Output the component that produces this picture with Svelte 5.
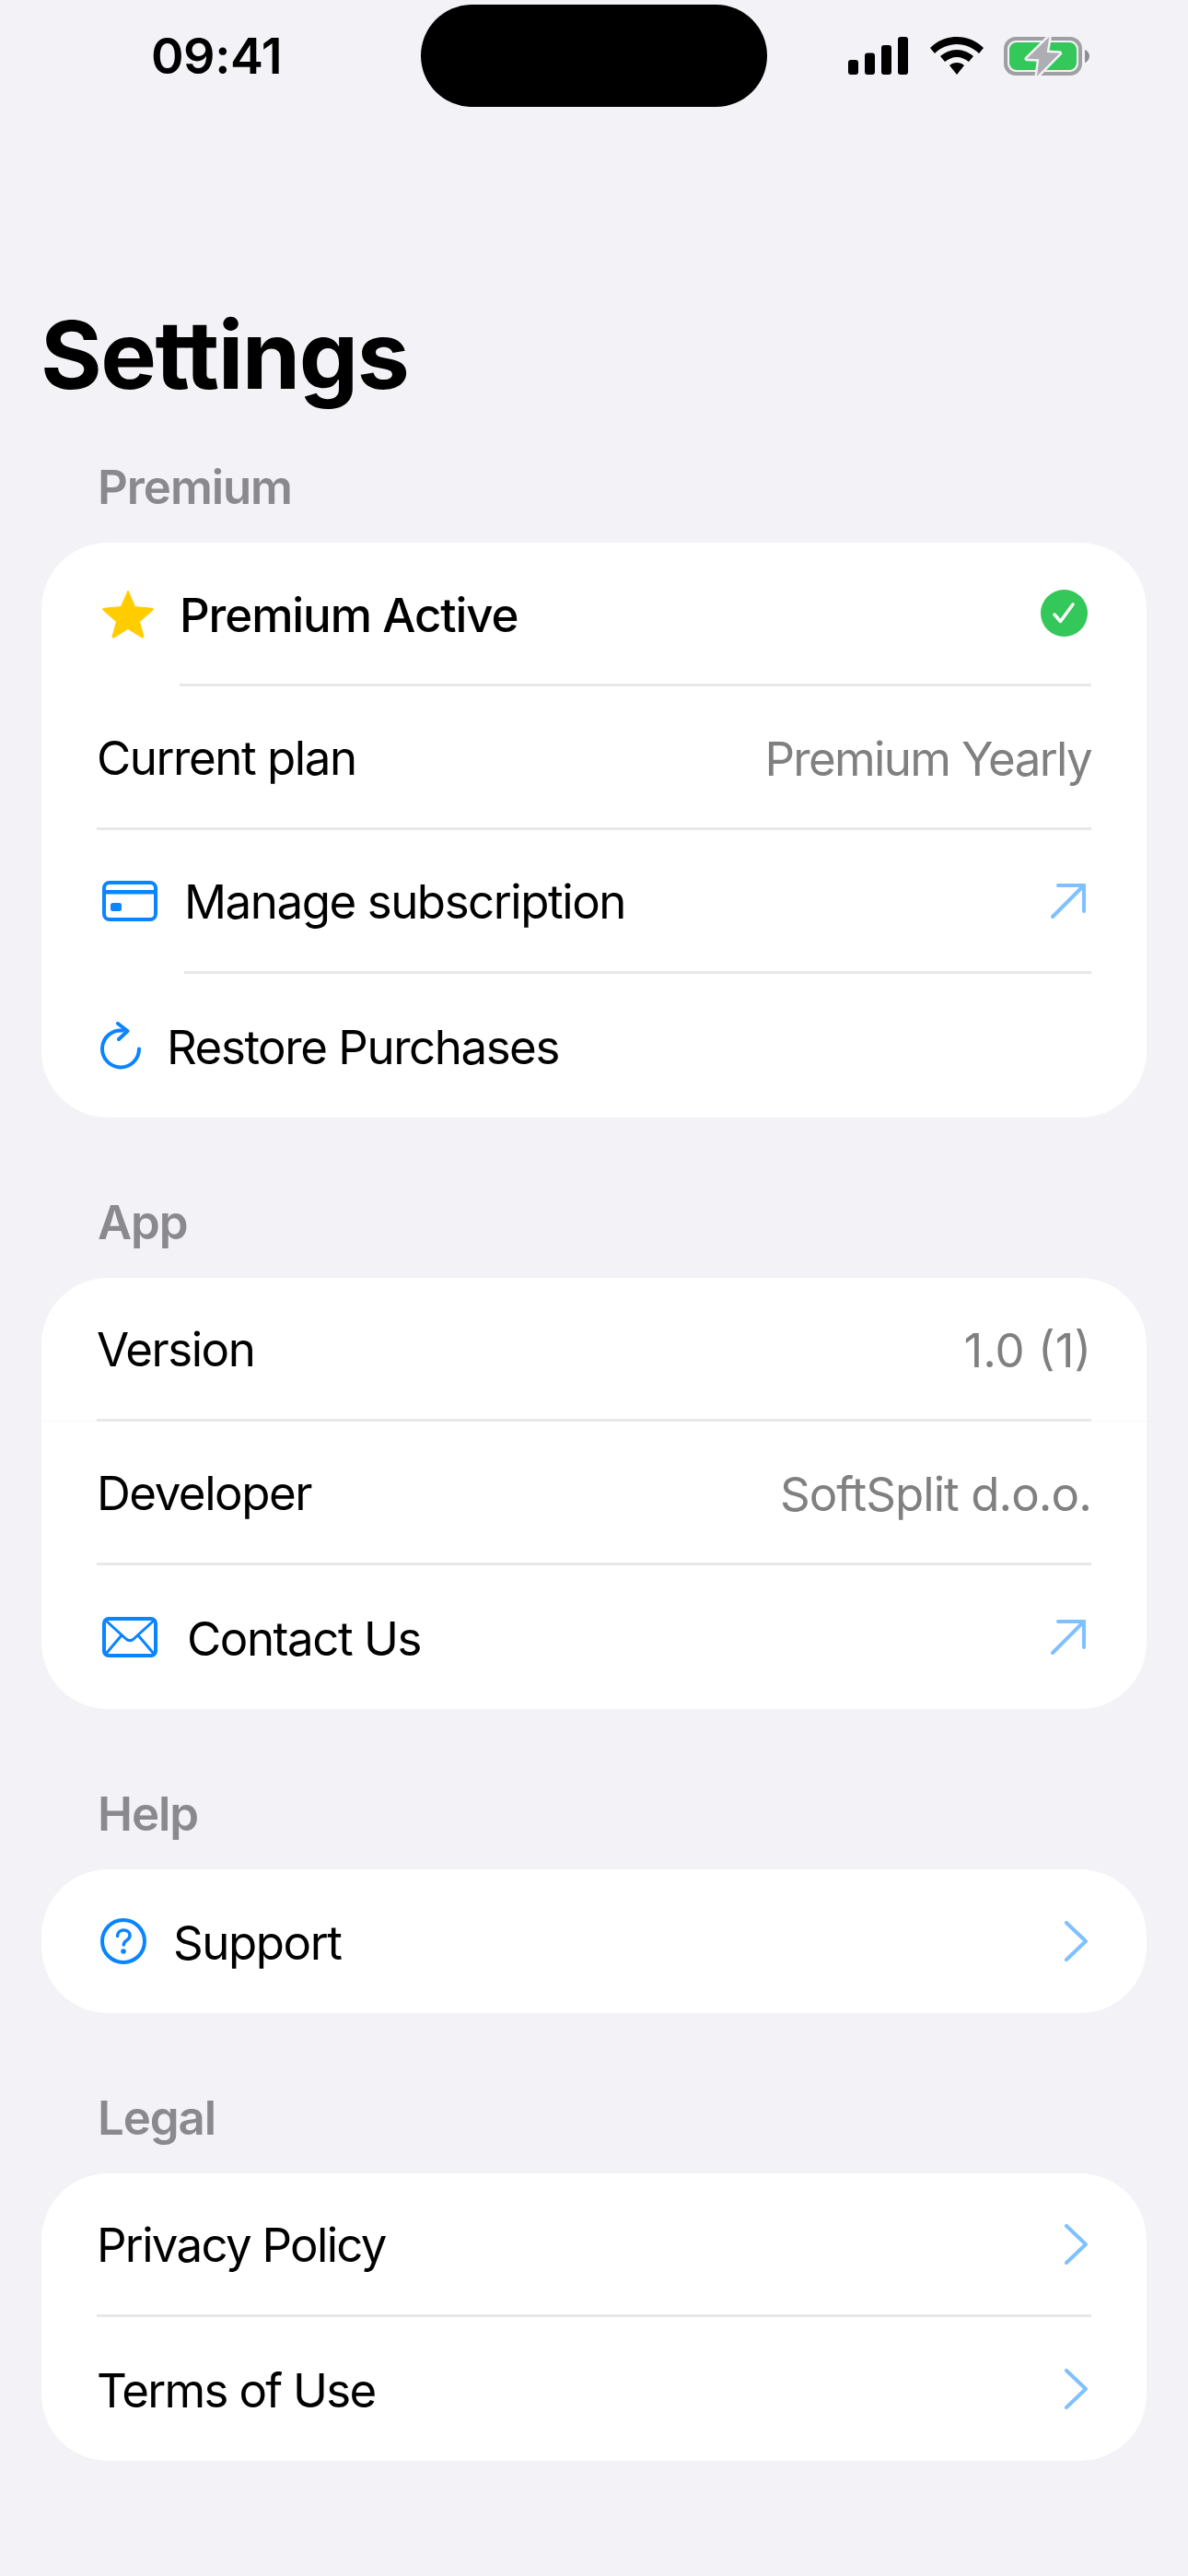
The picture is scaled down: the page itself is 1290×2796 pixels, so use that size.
<script>
    const sections = [
        {
            title: 'Premium',
            rows: [
                { label: 'Premium Active', icon: 'star', strong: true, trail: 'check', inset: 90, gap: 27 },
                { label: 'Current plan', value: 'Premium Yearly', track: -1.65, inset: 0 },
                { label: 'Manage subscription', icon: 'card', trail: 'arrow', inset: 95, gap: 29 },
                { label: 'Restore Purchases', icon: 'restore', gap: 28 }
            ]
        },
        {
            title: 'App',
            rows: [
                { label: 'Version', value: '1.0 (1)', track: 0, inset: 0, faint: true },
                { label: 'Developer', value: 'SoftSplit d.o.o.', track: -0.95, inset: 0 },
                { label: 'Contact Us', icon: 'mail', trail: 'arrow', gap: 32 }
            ]
        },
        {
            title: 'Help',
            rows: [{ label: 'Support', icon: 'help', trail: 'chevron', gap: 29 }]
        },
        {
            title: 'Legal',
            rows: [
                { label: 'Privacy Policy', labelTrack: -1.7, trail: 'chevron', inset: 0 },
                { label: 'Terms of Use', labelTrack: -1.7, trail: 'chevron' }
            ]
        }
    ];
</script>

<div class="page">
    <header class="status">
        <span class="time">09:41</span>
        <div class="island"></div>
        <div class="indicators">
            <svg class="signal" width="66" height="41" viewBox="0 0 66 41">
                <rect x="0" y="25" width="11" height="16" rx="3" />
                <rect x="18" y="17.500" width="11" height="23.500" rx="3" />
                <rect x="36" y="9" width="11" height="32" rx="3" />
                <rect x="54" y="0" width="11" height="41" rx="3" />
            </svg>
            <svg class="wifi" width="58" height="42" viewBox="0 0 58 42">
                <path d="M29 0C18 0 8 4 0 12l5 6c6-6 15-10 24-10s18 4 24 10l5-6C50 4 40 0 29 0z" />
                <path d="M29 14c-7 0-13 3-18 7l5 6c4-3 8-5 13-5s9 2 13 5l5-6c-5-4-11-7-18-7z" />
                <path d="M29 28c-3 0-6 1-8 3l8 10 8-10c-2-2-5-3-8-3z" />
            </svg>
            <svg class="battery" width="93" height="44" viewBox="0 0 93 44">
                <rect x="2" y="3" width="81" height="38" rx="11" fill="none" stroke="#a0a0a3" stroke-width="4" />
                <path d="M88 15c3 1 5 4 5 7s-2 6-5 7z" fill="#8e8e93" />
                <rect x="6" y="7" width="73" height="30" rx="8" fill="#34c759" />
                <path d="M49.300 1L25 24.700l13.300.6L36 43.700l24.700-25L46.700 18z" fill="#aeaeb2" stroke="#f2f2f7" stroke-width="5" stroke-linejoin="round" paint-order="stroke" />
            </svg>
        </div>
    </header>

    <h1>Settings</h1>

    {#each sections as section}
        <section>
            <h2>{section.title}</h2>
            <div class="card">
                {#each section.rows as row}
                    <div class="row">
                        <div class="lead" style={`gap: ${row.gap ?? 0}px`}>
                            {#if row.icon === 'star'}
                                <svg class="icon-star" width="58" height="54" viewBox="0 0 58 54">
                                    <path d="M29 2l7.600 17.600 18.900 1.700c1 .1 1.300 1.200.6 1.800L41.500 35.800l4.500 16c.3 1-.8 1.800-1.700 1.300L29 43.500 13.700 53.100c-.9.5-2-.3-1.700-1.300l4.500-16L1.900 23.100c-.7-.6-.4-1.700.6-1.800l18.900-1.700L29 2z" fill="#ffcc00" stroke="#ffcc00" stroke-width="1" stroke-linejoin="round" />
                                </svg>
                            {:else if row.icon === 'card'}
                                <svg class="icon-card" width="60" height="44" viewBox="0 0 60 44" fill="none">
                                    <rect x="2" y="2" width="56" height="40" rx="6" stroke="#0a84ff" stroke-width="4" />
                                    <rect x="2" y="10" width="56" height="4.500" fill="#0a84ff" />
                                    <rect x="9" y="24" width="12" height="9" rx="2.500" fill="#0a84ff" />
                                </svg>
                            {:else if row.icon === 'restore'}
                                <svg class="icon-restore" width="45" height="53" viewBox="0 0 45 53" fill="none">
                                    <path d="M25 9.500A20 20 0 1 0 43 29.500" stroke="#0a84ff" stroke-width="4" stroke-linecap="round" />
                                    <path d="M20 2l10.500 8L21 19" stroke="#0a84ff" stroke-width="4" stroke-linecap="round" stroke-linejoin="round" />
                                </svg>
                            {:else if row.icon === 'mail'}
                                <svg class="icon-mail" width="60" height="44" viewBox="0 0 60 44" fill="none" stroke="#0a84ff" stroke-width="3">
                                    <rect x="2" y="2" width="56" height="40" rx="5" stroke-width="4" />
                                    <path d="M4 4l22 20c2.500 2 5.500 2 8 0L56 4" stroke-linejoin="round" />
                                    <path d="M21 20L4 40M39 20l17 20" />
                                </svg>
                            {:else if row.icon === 'help'}
                                <svg class="icon-help" width="50" height="50" viewBox="0 0 50 50" fill="none">
                                    <circle cx="25" cy="25" r="23" stroke="#0a84ff" stroke-width="4" />
                                    <path d="M18.500 19.500c0-4 3-6.500 6.800-6.500s6.700 2.400 6.700 5.800c0 2.600-1.500 4-3.500 5.300-2 1.300-3.200 2.400-3.200 4.900" stroke="#0a84ff" stroke-width="3.500" stroke-linecap="round" />
                                    <circle cx="25" cy="36" r="2.800" fill="#0a84ff" />
                                </svg>
                            {/if}
                            <span class="label" class:strong={row.strong} style={row.labelTrack ? `letter-spacing: ${row.labelTrack}px` : undefined}>{row.label}</span>
                        </div>

                        {#if row.value}
                            <span class="value" style={`letter-spacing: ${row.track}px`}>{row.value}</span>
                        {:else if row.trail === 'check'}
                            <svg class="trail-check" width="51" height="51" viewBox="0 0 51 51" fill="none">
                                <circle cx="25.500" cy="25.500" r="25.500" fill="#34c759" />
                                <path d="M15 27l6.500 7.500L35 16" stroke="#fff" stroke-width="3.500" stroke-linecap="round" stroke-linejoin="round" />
                            </svg>
                        {:else if row.trail === 'arrow'}
                            <svg class="trail-arrow" width="38" height="38" viewBox="0 0 38 38" fill="none" stroke="#7fc1ff" stroke-width="4" stroke-linecap="round" stroke-linejoin="round">
                                <path d="M2 36L36 2" />
                                <path d="M8 2h28v28" />
                            </svg>
                        {:else if row.trail === 'chevron'}
                            <svg class="trail-chevron" width="26" height="44" viewBox="0 0 26 44" fill="none" stroke="#7fc1ff" stroke-width="4" stroke-linecap="round" stroke-linejoin="round">
                                <path d="M3 2l21 20L3 42" />
                            </svg>
                        {/if}
                    </div>
                    {#if row.inset !== undefined}
                        <div class="sep" class:faint={row.faint} style={`margin-left: ${row.inset}px`}></div>
                    {/if}
                {/each}
            </div>
        </section>
    {/each}
</div>

<style>
:global(body) {
    margin: 0;
    background: #f2f2f7;
}

.page {
    width: 1290px;
    height: 2796px;
    overflow: hidden;
    background: #f2f2f7;
    font-family: Inter, "Liberation Sans", sans-serif;
    color: #000;
}

.status {
    height: 121px;
    padding-top: 5px;
    box-sizing: border-box;
    display: grid;
    grid-template-columns: 457px 376px 457px;
}

.time {
    font-size: 54px;
    font-weight: 600;
    line-height: 111px;
    padding-left: 164px;
    letter-spacing: -0.5px;
}

.island {
    height: 111px;
    background: #000;
    border-radius: 56px;
}

.indicators {
    display: flex;
    align-items: center;
    padding-left: 88px;
    height: 111px;
}

.wifi {
    margin-left: 23px;
}

.battery {
    margin-left: 22px;
}

h1 {
    margin: 204px 0 53px 44px;
    font-size: 102px;
    line-height: 120px;
    font-weight: 700;
    letter-spacing: -1.500px;
}

section {
    margin: 0 45px;
}

h2 {
    margin: 0;
    padding-left: 61px;
    font-size: 51px;
    line-height: 62px;
    font-weight: 600;
    color: #8a8a8e;
    letter-spacing: -1.100px;
}

.card {
    margin-top: 29px;
    margin-bottom: 83px;
    padding: 0 60px;
    background: #fff;
    border-radius: 72px;
    isolation: isolate;
}

.row {
    height: 153px;
    display: flex;
    align-items: center;
    justify-content: space-between;
}

.row:last-child {
    height: 156px;
}

.lead {
    display: flex;
    align-items: center;
}

.icon-star {
    margin-left: 5px;
}

.icon-card,
.icon-mail {
    margin-left: 6px;
}

.icon-restore {
    margin-left: 3px;
}

.icon-help {
    margin-left: 4px;
}

.trail-check,
.trail-chevron {
    margin-right: 4px;
}

.trail-arrow {
    margin-right: 6px;
}

.label {
    padding-top: 3px;
    font-size: 51px;
    letter-spacing: -1.450px;
    line-height: 62px;
}

.label.strong {
    padding-top: 5px;
    font-weight: 500;
    letter-spacing: -1.100px;
}

.value {
    padding-top: 3px;
    font-size: 51px;
    color: #808080;
}

.sep {
    height: 3px;
    background: #e8e8e9;
    position: relative;
}

/* faint full-width line the reference has under the Version row */
.sep.faint::before {
    content: "";
    position: absolute;
    left: -60px;
    right: -60px;
    top: 2px;
    height: 1px;
    background: #f6f6f6;
    z-index: -1;
}
</style>
